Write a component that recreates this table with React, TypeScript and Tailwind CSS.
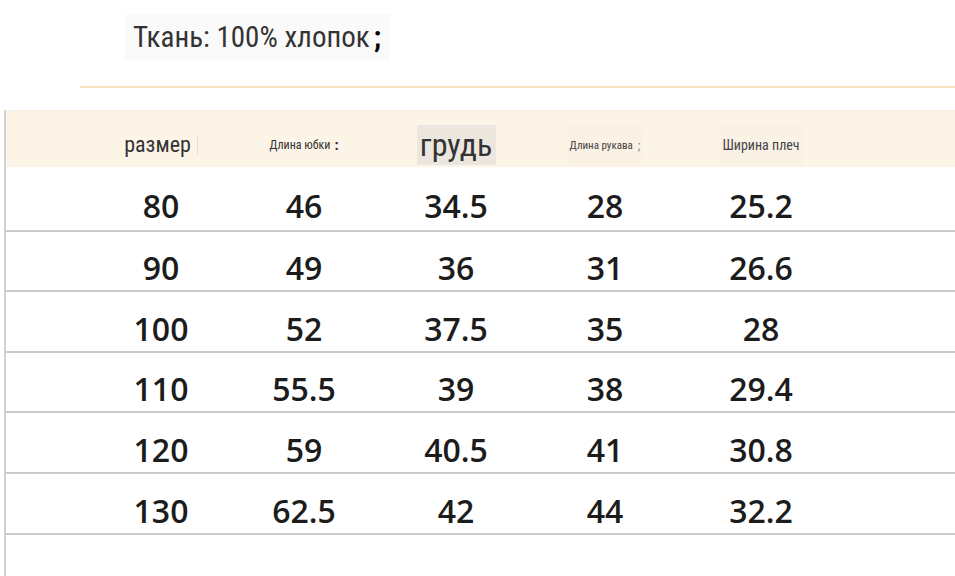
import React from "react";

const rows: string[][] = [
  ["80", "46", "34.5", "28", "25.2"],
  ["90", "49", "36", "31", "26.6"],
  ["100", "52", "37.5", "35", "28"],
  ["110", "55.5", "39", "38", "29.4"],
  ["120", "59", "40.5", "41", "30.8"],
  ["130", "62.5", "42", "44", "32.2"],
];

const heights = ["h-[65px]", "h-[60px]", "h-[61px]", "h-[60px]", "h-[61px]", "h-[61px]"];

const narrow = "font-['Liberation_Sans_Narrow','Roboto_Condensed','DejaVu_Sans_Condensed','Liberation_Sans',sans-serif] [font-stretch:condensed]";

export default function App() {
  return (
    <div className="w-[955px] h-[576px] bg-white overflow-hidden flex flex-col font-['Liberation_Sans',Arial,sans-serif]">
      <div className="pt-[14px] pl-[125px]">
        <div className={`flex items-center h-[46px] w-[265px] bg-[#fafafa] pl-[8px] text-[29px] text-[#333] ${narrow}`}>
          <span className="leading-none whitespace-nowrap">
            Ткань: 100% хлопок<span className="font-bold text-black ml-[4px]">;</span>
          </span>
        </div>
      </div>
      <div className="mt-[26px] ml-[80px] h-[2px] bg-[#fbe3bf]" />
      <div className="mt-[22px] ml-[4px] h-[466px] border-l-2 border-[#d2d2d2]">
        <div className={`h-[57px] bg-[#fdf4e8] border-t border-[#f1ece5] pl-[84px] pt-[12px] grid grid-cols-[142px_144px_160px_138px_174px] items-center ${narrow}`}>
          <div className="flex justify-center items-center">
            <span className="text-[22px] text-[#333] leading-none">размер</span>
            <span className="ml-[6px] w-[1px] h-[18px] bg-[#e4dcd2]" />
          </div>
          <div className="flex justify-center items-center text-[#333]">
            <span className="text-[12px] leading-none whitespace-nowrap">Длина юбки</span>
            <span className="ml-[4px] text-[15px] font-bold leading-none">:</span>
          </div>
          <div className="flex justify-center items-center">
            <div className="w-[79px] h-[40px] bg-[#ece7de] flex items-center justify-center">
              <span className="text-[32px] text-[#333] leading-none">грудь</span>
            </div>
          </div>
          <div className="flex justify-center items-center text-[#444]">
            <div className="flex items-center bg-[#fbf1e4] h-[44px] px-[2px]">
              <span className="text-[11px] leading-none whitespace-nowrap">Длина рукава</span>
              <span className="ml-[5px] text-[13px] text-[#888] leading-none">;</span>
            </div>
          </div>
          <div className="flex justify-center items-center text-[#444]">
            <div className="flex items-center bg-[#fbf2e6] h-[44px] px-[3px]">
              <span className="text-[14px] leading-none whitespace-nowrap">Ширина плеч</span>
            </div>
          </div>
        </div>
        {rows.map((r, i) => (
          <div
            key={i}
            className={`${heights[i]} box-border border-b-2 border-[#cacaca] pl-[84px] pt-[14px] grid grid-cols-[142px_144px_160px_138px_174px] items-center`}
          >
            {r.map((c, j) => (
              <div key={j} className="flex justify-center">
                <span className="text-[32px] font-semibold text-[#1c1c1c] leading-none font-['Open_Sans','Noto_Sans',sans-serif]">
                  {c}
                </span>
              </div>
            ))}
          </div>
        ))}
      </div>
    </div>
  );
}
